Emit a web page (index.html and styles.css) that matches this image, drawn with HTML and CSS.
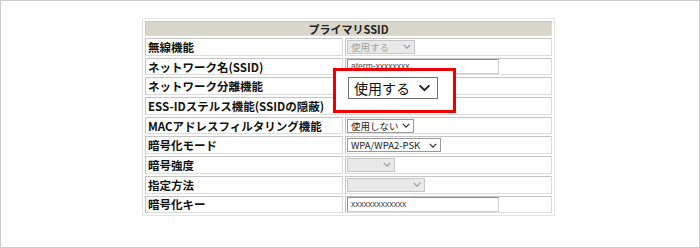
FILE: index.html
```html
<!DOCTYPE html>
<html lang="ja">
<head>
<meta charset="utf-8">
<link rel="stylesheet" href="styles.css">
</head>
<body>
<div class="frame">
  <table class="cfg">
    <tr><th colspan="2" class="head">プライマリSSID</th></tr>
    <tr><td class="lbl">無線機能</td><td class="val"><span class="sel dis w68"><span>使用する</span><svg viewBox="0 0 10 6" class="chev"><path d="M1 1l4 4 4-4"/></svg></span></td></tr>
    <tr><td class="lbl">ネットワーク名(SSID)</td><td class="val"><span class="inp">aterm-xxxxxxxx</span></td></tr>
    <tr><td class="lbl">ネットワーク分離機能</td><td class="val"><span class="sel w68"><span></span><svg viewBox="0 0 10 6" class="chev"><path d="M1 1l4 4 4-4"/></svg></span></td></tr>
    <tr><td class="lbl">ESS-IDステルス機能(SSIDの隠蔽)</td><td class="val"><span class="sel w68"><span></span><svg viewBox="0 0 10 6" class="chev"><path d="M1 1l4 4 4-4"/></svg></span></td></tr>
    <tr><td class="lbl">MACアドレスフィルタリング機能</td><td class="val"><span class="sel w66"><span>使用しない</span><svg viewBox="0 0 10 6" class="chev"><path d="M1 1l4 4 4-4"/></svg></span></td></tr>
    <tr><td class="lbl">暗号化モード</td><td class="val"><span class="sel w93"><span>WPA/WPA2-PSK</span><svg viewBox="0 0 10 6" class="chev"><path d="M1 1l4 4 4-4"/></svg></span></td></tr>
    <tr><td class="lbl">暗号強度</td><td class="val"><span class="sel dis w48"><span></span><svg viewBox="0 0 10 6" class="chev"><path d="M1 1l4 4 4-4"/></svg></span></td></tr>
    <tr><td class="lbl">指定方法</td><td class="val"><span class="sel dis w78"><span></span><svg viewBox="0 0 10 6" class="chev"><path d="M1 1l4 4 4-4"/></svg></span></td></tr>
    <tr><td class="lbl">暗号化キー</td><td class="val"><span class="inp">xxxxxxxxxxxxx</span></td></tr>
  </table>
  <div class="zoombox">
    <span class="bigsel"><span>使用する</span><svg viewBox="0 0 14 9" class="bigchev"><path d="M1.5 1.5l5.5 5.5 5.5-5.5"/></svg></span>
  </div>
</div>
</body>
</html>
```
FILE: styles.css
```css
html, body {
  margin: 0;
  padding: 0;
  background: #fff;
}
.frame {
  position: relative;
  width: 700px;
  height: 248px;
  box-sizing: border-box;
  border: 1px solid #cccccc;
  padding: 17px 0 0 141px;
  font-family: "Noto Sans CJK JP", "Liberation Sans", sans-serif;
}
.cfg {
  width: 413px;
  border-collapse: separate;
  border-spacing: 2px;
  border: 1px solid #e4e4e4;
}
.cfg th, .cfg td {
  padding: 0;
  border: 1px solid #c4c4c4;
  border-right-color: #dcdcdc;
  border-bottom-color: #dcdcdc;
  height: 17.7px;
  box-sizing: border-box;
  vertical-align: middle;
  line-height: 14px;
}
.cfg th.head {
  background: #d9d7cc;
  font-size: 11px;
  font-weight: bold;
  color: #222;
  text-align: center;
  height: 15px;
  line-height: 12px;
}
.lbl {
  width: 198px;
  font-size: 11.5px;
  font-weight: bold;
  color: #111;
  padding-left: 2px !important;
  white-space: nowrap;
  letter-spacing: 0;
}
.val {
  padding-left: 1px !important;
}
.sel {
  display: flex;
  align-items: center;
  justify-content: space-between;
  box-sizing: border-box;
  height: 14px;
  border: 1px solid #9a9a9a;
  background: #fff;
  font-size: 9.5px;
  color: #222;
  padding: 0 3px 0 3px;
  line-height: 12px;
  white-space: nowrap;
}
.sel.dis {
  background: #e9e9e9;
  border-color: #c6c6c6;
  color: #a4a4a4;
}
.chev {
  width: 8px;
  height: 5px;
  fill: none;
  stroke: #333;
  stroke-width: 1.6;
  flex: none;
  margin-left: 3px;
}
.sel.dis .chev {
  stroke: #999;
}
.w68 { width: 68px; }
.w66 { width: 67px; }
.w93 { width: 94px; }
.w48 { width: 48px; }
.w78 { width: 78px; }
.inp {
  display: block;
  box-sizing: border-box;
  width: 152px;
  height: 15px;
  border: 1px solid #8f8f8f;
  border-right-color: #cfcfcf;
  border-bottom-color: #cfcfcf;
  font-family: "Liberation Sans", sans-serif;
  font-size: 8.5px;
  line-height: 13px;
  color: #444;
  padding-left: 3px;
}
.zoombox {
  position: absolute;
  left: 332px;
  top: 67px;
  width: 123px;
  height: 45px;
  box-sizing: border-box;
  border: 3px solid #ee0000;
  background: #fff;
  padding: 6px 0 0 12px;
}
.bigsel {
  display: flex;
  align-items: center;
  justify-content: space-between;
  box-sizing: border-box;
  width: 90px;
  height: 22px;
  border: 1px solid #707070;
  padding: 0 6px 0 5px;
  font-size: 14px;
  color: #111;
  line-height: 20px;
}
.bigchev {
  width: 13px;
  height: 8px;
  fill: none;
  stroke: #222;
  stroke-width: 2.2;
}
```
